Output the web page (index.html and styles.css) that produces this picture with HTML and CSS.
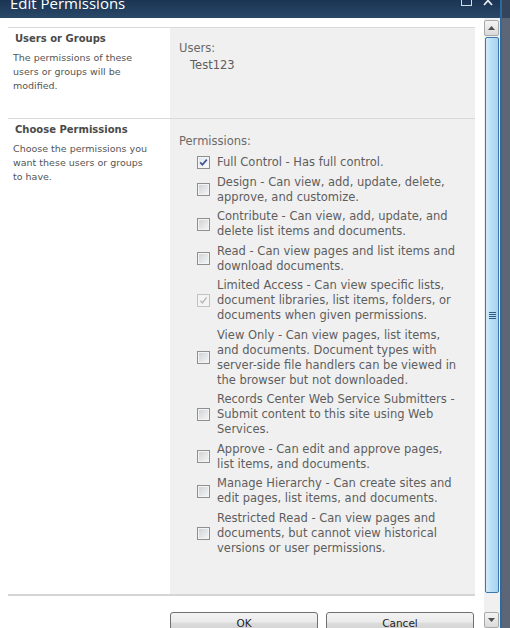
FILE: index.html
```html
<!DOCTYPE html>
<html>
<head>
<meta charset="utf-8">
<title>Edit Permissions</title>
<link rel="stylesheet" href="styles.css">
</head>
<body>
<div class="dialog">
  <div class="titlebar">
    <span class="title">Edit Permissions</span>
    <span class="winbtns">
      <svg class="wb" width="11" height="6" viewBox="0 0 11 6"><rect x="0.5" y="-6" width="10" height="11.5" fill="none" stroke="#d3dce8" stroke-width="1"/></svg>
      <svg class="wb" width="10" height="6" viewBox="0 0 10 6"><path d="M1 -4 L9 5 M9 -4 L1 5" stroke="#e3e9f1" stroke-width="1.8" fill="none"/></svg>
    </span>
  </div>
  <div class="frame">
    <div class="content">
      <div class="formtable">
        <div class="section sec-users">
          <div class="label">
            <h3>Users or Groups</h3>
            <p>The permissions of these<br>users or groups will be<br>modified.</p>
          </div>
          <div class="control">
            <div class="caption">Users:</div>
            <div class="user">Test123</div>
          </div>
        </div>
        <div class="section sec-perms">
          <div class="label">
            <h3>Choose Permissions</h3>
            <p>Choose the permissions you<br>want these users or groups<br>to have.</p>
          </div>
          <div class="control">
            <div class="caption">Permissions:</div>
            <ul class="perms">
              <li><span class="cb checked"><svg width="11" height="11" viewBox="0 0 11 11"><path d="M2.2 5.4 L4.4 7.8 L8.8 2.6" fill="none" stroke="#3e5590" stroke-width="1.7"/></svg></span><span class="txt">Full Control - Has full control.</span></li>
              <li><span class="cb"></span><span class="txt">Design - Can view, add, update, delete,<br>approve, and customize.</span></li>
              <li><span class="cb"></span><span class="txt">Contribute - Can view, add, update, and<br>delete list items and documents.</span></li>
              <li><span class="cb"></span><span class="txt">Read - Can view pages and list items and<br>download documents.</span></li>
              <li><span class="cb disabled"><svg width="11" height="11" viewBox="0 0 11 11"><path d="M2.4 5.6 L4.4 8 L8.6 2.4" fill="none" stroke="#b4b4b4" stroke-width="1.3"/></svg></span><span class="txt">Limited Access - Can view specific lists,<br>document libraries, list items, folders, or<br>documents when given permissions.</span></li>
              <li><span class="cb"></span><span class="txt">View Only - Can view pages, list items,<br>and documents. Document types with<br>server-side file handlers can be viewed in<br>the browser but not downloaded.</span></li>
              <li><span class="cb"></span><span class="txt">Records Center Web Service Submitters -<br>Submit content to this site using Web<br>Services.</span></li>
              <li><span class="cb"></span><span class="txt">Approve - Can edit and approve pages,<br>list items, and documents.</span></li>
              <li><span class="cb"></span><span class="txt">Manage Hierarchy - Can create sites and<br>edit pages, list items, and documents.</span></li>
              <li><span class="cb"></span><span class="txt">Restricted Read - Can view pages and<br>documents, but cannot view historical<br>versions or user permissions.</span></li>
            </ul>
          </div>
        </div>
      </div>
      <div class="buttons">
        <button class="btn" type="button">OK</button>
        <button class="btn" type="button">Cancel</button>
      </div>
    </div>
    <div class="scrollbar">
      <div class="sb-btn"><svg width="7" height="4" viewBox="0 0 7 4"><path d="M0 4 L3.5 0 L7 4 Z" fill="#4f4f4f"/></svg></div>
      <div class="sb-track"><div class="thumb"><span class="grip"></span></div></div>
      <div class="sb-btn"><svg width="7" height="4" viewBox="0 0 7 4"><path d="M0 0 L3.5 4 L7 0 Z" fill="#4f4f4f"/></svg></div>
    </div>
  </div>
</div>
</body>
</html>
```

FILE: styles.css
```css
html, body {
  margin: 0;
  padding: 0;
  overflow: hidden;
}
body {
  width: 510px;
  height: 628px;
  background: linear-gradient(to bottom, #34445a 0, #34445a 18px, #5d6676 18px);
  font-family: "DejaVu Sans", sans-serif;
}
.dialog {
  width: 500px;
  height: 628px;
  border-right: 2px solid #2f6a9f;
  display: flex;
  flex-direction: column;
  background: #fff;
}
.titlebar {
  height: 18px;
  flex: none;
  display: flex;
  align-items: flex-start;
  overflow: hidden;
  background: linear-gradient(#1b3453, #2a4868);
}
.title {
  font-family: "Open Sans", sans-serif;
  font-size: 15px;
  line-height: 18px;
  color: #fff;
  margin: -6px 0 0 10px;
  white-space: nowrap;
}
.winbtns {
  margin-left: auto;
  margin-right: 7px;
  display: flex;
  gap: 11px;
}
.wb { display: block; }

.frame {
  flex: 1;
  display: flex;
  min-height: 0;
}
.content {
  width: 467px;
  padding: 9px 9px 0 8px;
}
.formtable {
  border-top: 1px solid #d9d9d9;
}
.section {
  display: grid;
  grid-template-columns: 162px 305px;
}
.sec-users {
  height: 90px;
  border-bottom: 1px solid #d9d9d9;
}
.sec-perms {
  height: 475px;
  border-bottom: 2px solid #d5d5d5;
}
.label {
  padding: 4px 0 0 5px;
}
.label h3 {
  margin: 0 0 5px 2px;
  font-size: 10px;
  line-height: 14px;
  font-weight: bold;
  color: #4a4a4a;
}
.label p {
  margin: 0;
  font-size: 9.5px;
  line-height: 14px;
  color: #555;
}
.control {
  background: #f0f0f0;
  padding-left: 9px;
  font-size: 11.5px;
  line-height: 15px;
  color: #5e5e5e;
}
.sec-users .control { padding-top: 13px; }
.sec-perms .control { padding-top: 15px; }
.caption { color: #6a6a6a; }
.user {
  margin-top: 2px;
  padding-left: 11px;
}
.perms {
  list-style: none;
  margin: 6px 0 0;
  padding: 0 0 0 18px;
  display: flex;
  flex-direction: column;
  gap: 4.5px;
}
.perms li {
  display: flex;
  align-items: center;
}
.cb {
  flex: none;
  box-sizing: border-box;
  width: 13px;
  height: 13px;
  margin-right: 7px;
  border: 1px solid #8f8f8f;
  box-shadow: inset 0 0 0 1px #f4f4f4;
  background: linear-gradient(135deg, #cdd0d4, #f7f7f7);
  display: flex;
  align-items: center;
  justify-content: center;
}
.cb svg { display: block; }
.cb.checked {
  background: linear-gradient(135deg, #dfe6f1, #fafbfd);
}
.cb.disabled {
  border-color: #c2c2c2;
  background: #f4f4f4;
}
.txt { white-space: nowrap; }

.buttons {
  margin-top: 16px;
  padding-left: 162px;
  display: flex;
  gap: 8px;
}
.btn {
  width: 148px;
  height: 21px;
  padding: 0;
  border: 1px solid #707070;
  border-radius: 3px;
  background: linear-gradient(#f3f3f3 0%, #ebebeb 48%, #dddddd 52%, #cfcfcf 100%);
  font-family: "DejaVu Sans", sans-serif;
  font-size: 10.5px;
  color: #1e1e1e;
}

.scrollbar {
  width: 16px;
  padding-top: 2px;
  display: flex;
  flex-direction: column;
  background: #f0f0f0;
}
.sb-btn {
  flex: none;
  box-sizing: border-box;
  width: 15px;
  height: 16px;
  border: 1px solid #a9a9a9;
  border-radius: 2px;
  background: linear-gradient(#f4f4f4, #dadada);
  display: flex;
  align-items: center;
  justify-content: center;
}
.sb-track {
  flex: 1;
  padding-top: 1px;
}
.thumb {
  box-sizing: border-box;
  width: 14px;
  height: 556px;
  margin-left: 1px;
  border: 1px solid #3c78aa;
  border-radius: 2px;
  background: linear-gradient(to right, #d3ecfb, #b8def6 45%, #a6d3f1 100%);
  display: flex;
  align-items: center;
  justify-content: center;
}
.grip {
  width: 7px;
  height: 7px;
  background: repeating-linear-gradient(to bottom, #2f5b82 0, #2f5b82 1px, transparent 1px, transparent 2px);
}
```
